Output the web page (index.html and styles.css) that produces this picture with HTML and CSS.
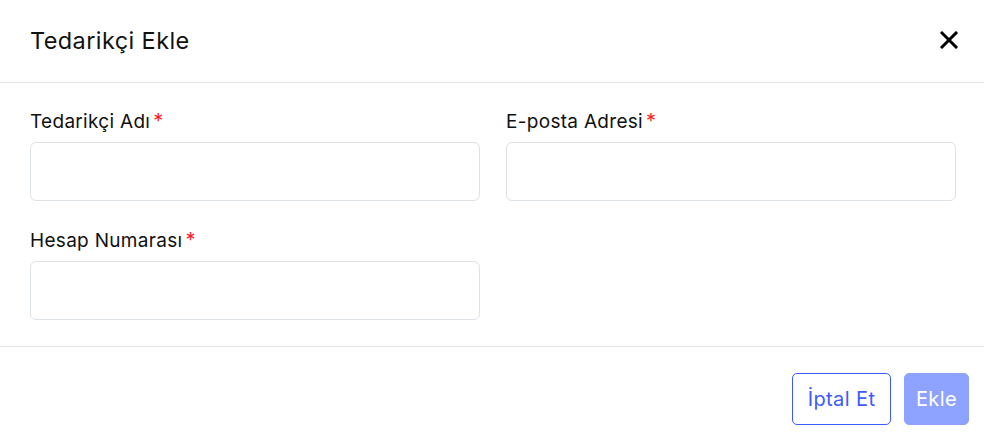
FILE: index.html
```html
<!DOCTYPE html>
<html lang="tr">
<head>
<meta charset="utf-8">
<title>Tedarikçi Ekle</title>
<link rel="stylesheet" href="styles.css">
</head>
<body>
<div class="modal">
  <div class="modal-header">
    <h2 class="modal-title">Tedarikçi Ekle</h2>
    <button class="close-btn" aria-label="Kapat">
      <svg width="18" height="18" viewBox="0 0 18 18"><path d="M2 2 L16 16 M16 2 L2 16" stroke="#000" stroke-width="3" stroke-linecap="square"/></svg>
    </button>
  </div>
  <div class="modal-body">
    <div class="field">
      <label class="label">Tedarikçi Adı<span class="req">*</span></label>
      <input class="input" type="text">
    </div>
    <div class="field">
      <label class="label">E-posta Adresi<span class="req">*</span></label>
      <input class="input" type="text">
    </div>
    <div class="field">
      <label class="label">Hesap Numarası<span class="req">*</span></label>
      <input class="input" type="text">
    </div>
  </div>
  <div class="modal-footer">
    <button class="btn btn-outline">İptal Et</button>
    <button class="btn btn-primary">Ekle</button>
  </div>
</div>
</body>
</html>
```

FILE: styles.css
```css
* { box-sizing: border-box; }
html, body { margin: 0; padding: 0; background: #fff; }
body { font-family: "Inter", "Noto Sans", sans-serif; color: #111; }

.modal { width: 984px; height: 442px; display: flex; flex-direction: column; }

.modal-header {
  height: 83px;
  border-bottom: 1px solid #e2e6ea;
  display: flex;
  align-items: center;
  justify-content: space-between;
  padding: 0 25px 2px 30px;
}
.modal-title { margin: 0; font-size: 23.5px; font-weight: 400; color: #111; letter-spacing: 0.4px; }
.close-btn { background: none; border: 0; padding: 0; width: 20px; height: 20px; display: flex; align-items: center; justify-content: center; cursor: pointer; }

.modal-body {
  display: grid;
  grid-template-columns: 450px 450px;
  column-gap: 26px;
  row-gap: 28px;
  padding: 27px 28px 26px 30px;
  border-bottom: 1px solid #e2e6ea;
}
.field { display: flex; flex-direction: column; }
.label { font-size: 19px; line-height: 24px; height: 24px; margin-bottom: 8px; color: #111; letter-spacing: 0.3px; }
.req { color: #ff1f1f; margin-left: 3px; font-size: 20px; line-height: 0; }
.input {
  height: 59px;
  border: 1px solid #dde2e7;
  border-radius: 6px;
  background: #fff;
  outline: none;
  font: inherit;
}

.modal-footer {
  display: flex;
  justify-content: flex-end;
  gap: 13px;
  padding: 26px 15px 0 0;
}
.btn {
  height: 52px;
  border-radius: 5px;
  font-family: inherit;
  font-size: 20px;
  letter-spacing: 0.4px;
  padding: 0;
  cursor: pointer;
}
.btn-outline { background: #fff; border: 1px solid #3d5afe; color: #3d5afe; width: 99px; }
.btn-primary { background: #8ea3ff; border: 1px solid #8ea3ff; color: #fff; width: 65px; }
```
